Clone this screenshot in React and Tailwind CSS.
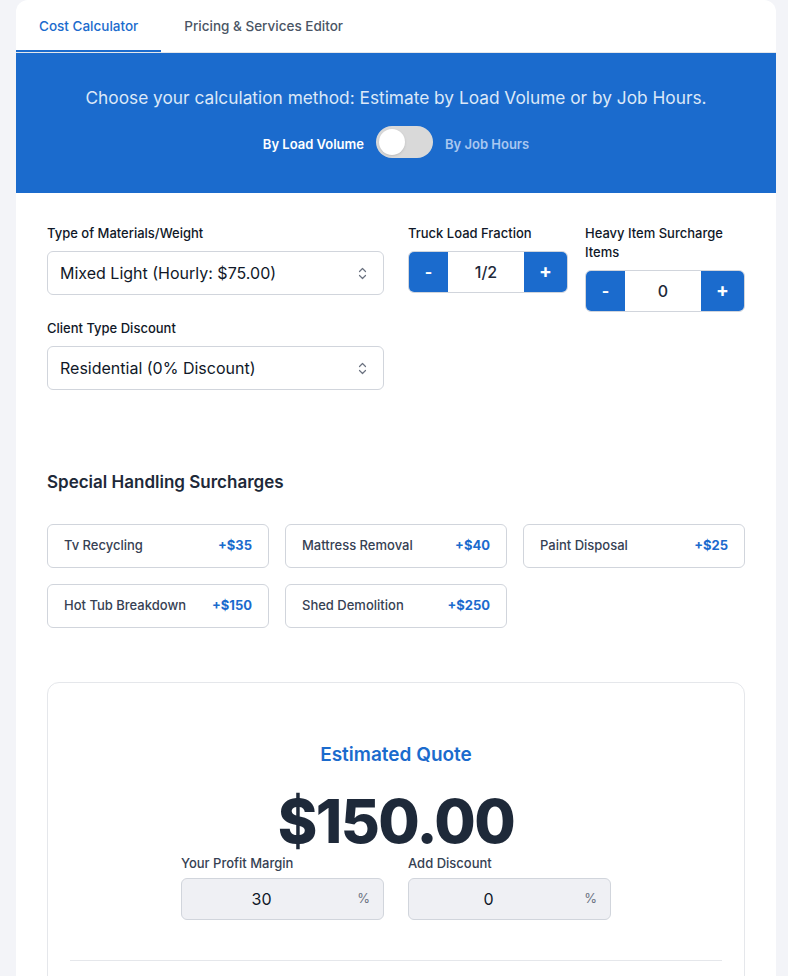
import { useState } from "react";

const SURCHARGES = [
  { name: "Tv Recycling", price: 35 },
  { name: "Mattress Removal", price: 40 },
  { name: "Paint Disposal", price: 25 },
  { name: "Hot Tub Breakdown", price: 150 },
  { name: "Shed Demolition", price: 250 },
];

function UpDownIcon() {
  return (
    <svg width="9" height="13" viewBox="0 0 9 13" fill="none" stroke="#6b7280" strokeWidth="1.2" strokeLinecap="round" strokeLinejoin="round">
      <path d="M1.5 4.5L4.5 1.5L7.5 4.5" />
      <path d="M1.5 8.5L4.5 11.5L7.5 8.5" />
    </svg>
  );
}

function SelectBox({ label, value }) {
  return (
    <div>
      <p className="text-[13px] leading-[19px] font-medium text-gray-900 mb-2">{label}</p>
      <div className="h-[44px] rounded-md border border-gray-300 bg-white flex items-center justify-between pl-3 pr-4">
        <span className="text-[16px] text-gray-900">{value}</span>
        <UpDownIcon />
      </div>
    </div>
  );
}

function Stepper({ label, value }) {
  return (
    <div>
      <p className="text-[13px] leading-[19px] font-medium text-gray-900 mb-2">{label}</p>
      <div className="h-[42px] rounded-md border border-gray-300 bg-white flex items-stretch overflow-hidden">
        <button className="w-[39px] bg-[#1b6bcd] text-white text-[16px] font-bold">-</button>
        <div className="flex-1 flex items-center justify-center text-[16px] font-medium text-gray-800">{value}</div>
        <button className="w-[43px] bg-[#1b6bcd] text-white text-[19px] font-bold">+</button>
      </div>
    </div>
  );
}

function PercentInput({ label, value }) {
  return (
    <div className="w-[203px]">
      <p className="text-[13px] leading-[20px] font-medium text-gray-700 mb-[5px]">{label}</p>
      <div className="relative h-[42px] rounded-md border border-gray-300 bg-[#eff0f4] flex items-center">
        <span className="flex-1 text-center pr-[42px] text-[16px] text-gray-900">{value}</span>
        <span className="absolute right-[13px] text-[13px] text-gray-500">%</span>
      </div>
    </div>
  );
}

export default function App() {
  const [tab, setTab] = useState("calc");
  const [byHours, setByHours] = useState(false);

  return (
    <div className="min-h-screen bg-[#f3f4f8]" style={{ fontFamily: "Inter, 'Noto Sans', sans-serif" }}>
      <div className="ml-4 w-[760px] bg-white rounded-t-xl overflow-hidden">
        {/* Tabs */}
        <div className="flex h-[53px] border-b border-gray-200">
          <button
            onClick={() => setTab("calc")}
            className={`px-[23px] pt-[2px] text-[13.5px] font-medium border-b-2 ${tab === "calc" ? "text-[#1b6bcd] border-[#1b6bcd]" : "text-gray-600 border-transparent"}`}
          >
            Cost Calculator
          </button>
          <button
            onClick={() => setTab("editor")}
            className={`px-[23px] pt-[2px] text-[13.5px] font-medium border-b-2 ${tab === "editor" ? "text-[#1b6bcd] border-[#1b6bcd]" : "text-gray-600 border-transparent"}`}
          >
            Pricing &amp; Services Editor
          </button>
        </div>

        {/* Method banner */}
        <div className="bg-[#1b6bcd] pt-[31px] pb-[35px] flex flex-col items-center">
          <p className="text-[17.3px] leading-[28px] text-[#dce8f8] mb-[14px]">
            Choose your calculation method: Estimate by Load Volume or by Job Hours.
          </p>
          <div className="flex items-center gap-3">
            <span className={`pt-[6px] text-[13px] font-semibold ${byHours ? "text-[#a9c7f0]" : "text-white"}`}>By Load Volume</span>
            <button
              onClick={() => setByHours(!byHours)}
              className={`w-[57px] h-[32px] rounded-full bg-[#d9d9d9] flex items-center px-[3px] ${byHours ? "justify-end" : "justify-start"}`}
            >
              <span className="w-[26px] h-[26px] rounded-full bg-white shadow-sm" />
            </button>
            <span className={`pt-[6px] text-[13px] font-semibold ${byHours ? "text-white" : "text-[#a9c7f0]"}`}>By Job Hours</span>
          </div>
        </div>

        {/* Inputs */}
        <div className="px-[31px] pt-[31px]">
          <div className="flex items-start">
            <div className="w-[337px] flex flex-col gap-6">
              <SelectBox label="Type of Materials/Weight" value="Mixed Light (Hourly: $75.00)" />
              <SelectBox label="Client Type Discount" value="Residential (0% Discount)" />
            </div>
            <div className="w-[160px] ml-6">
              <Stepper label="Truck Load Fraction" value="1/2" />
            </div>
            <div className="w-[160px] ml-[17px]">
              <Stepper label="Heavy Item Surcharge Items" value="0" />
            </div>
          </div>

          {/* Surcharges */}
          <h2 className="mt-[80px] text-[17px] leading-[24px] font-semibold text-gray-800">Special Handling Surcharges</h2>
          <div className="mt-[30px] grid grid-cols-3 gap-4">
            {SURCHARGES.map((s) => (
              <div key={s.name} className="h-[44px] rounded-md border border-gray-300 flex items-center justify-between px-4">
                <span className="text-[13px] font-medium text-gray-700">{s.name}</span>
                <span className="text-[13px] font-bold text-[#1b6bcd]">+${s.price}</span>
              </div>
            ))}
          </div>

          {/* Quote */}
          <div className="mt-[54px] rounded-xl border border-gray-200 px-[22px] pt-[58px] pb-10">
            <p className="text-center text-[19px] leading-[28px] font-semibold text-[#1b6bcd]">Estimated Quote</p>
            <p className="mt-[27px] text-center text-[60px] leading-[50px] font-extrabold tracking-tight text-gray-800">$150.00</p>
            <div className="mt-[7px] flex justify-center gap-6">
              <PercentInput label="Your Profit Margin" value="30" />
              <PercentInput label="Add Discount" value="0" />
            </div>
            <div className="mt-10 border-t border-gray-200" />
            <div className="h-10" />
          </div>
        </div>
      </div>
    </div>
  );
}
